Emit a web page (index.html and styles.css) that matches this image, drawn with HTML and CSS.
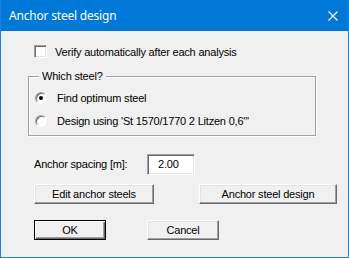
FILE: index.html
```html
<!DOCTYPE html>
<html>
<head>
<meta charset="utf-8">
<link rel="stylesheet" href="styles.css">
</head>
<body>
<div class="dialog">
  <div class="titlebar">
    <span class="title">Anchor steel design</span>
    <svg class="close" width="10" height="10" viewBox="0 0 10 10"><path d="M0.5 0.5 L9.5 9.5 M9.5 0.5 L0.5 9.5" stroke="#fff" stroke-width="1.1" fill="none"/></svg>
  </div>
  <div class="content">
    <div class="row check-row">
      <span class="checkbox"></span>
      <span class="label">Verify automatically after each analysis</span>
    </div>
    <div class="group">
      <span class="legend">Which steel?</span>
      <div class="row radio-row first">
        <span class="radio checked"></span>
        <span class="label">Find optimum steel</span>
      </div>
      <div class="row radio-row">
        <span class="radio"></span>
        <span class="label">Design using 'St 1570/1770 2 Litzen 0,6"'</span>
      </div>
    </div>
    <div class="row spacing-row">
      <span class="spacing-label">Anchor spacing [m]:</span>
      <span class="input">2.00</span>
    </div>
    <div class="row btn-row1">
      <span class="btn btn-edit">Edit anchor steels</span>
      <span class="btn btn-design">Anchor steel design</span>
    </div>
    <div class="row btn-row2">
      <span class="btn btn-ok default">OK</span>
      <span class="btn btn-cancel">Cancel</span>
    </div>
  </div>
</div>
</body>
</html>
```
FILE: styles.css
```css
html, body {
  margin: 0;
  padding: 0;
  background: #f0f0f0;
}
.dialog {
  width: 349px;
  height: 258px;
  box-sizing: border-box;
  border: 1px solid #1883d7;
  border-top: none;
  background: #f0f0f0;
  font-family: "Liberation Sans", Arial, sans-serif;
  font-size: 11px;
  letter-spacing: -0.2px;
  color: #000;
  overflow: hidden;
}
.titlebar {
  height: 31px;
  margin: 0 -1px;
  background: #0078d7;
  display: flex;
  align-items: center;
  justify-content: space-between;
  padding: 0 11px 0 9px;
}
.title {
  color: #fff;
  font-family: "Noto Sans", sans-serif;
  font-size: 12px;
  letter-spacing: -0.2px;
  margin-top: -1px;
}
.close {
  display: block;
  margin-top: 1px;
}
.content {
  padding-left: 33px;
  padding-top: 14px;
}
.row {
  display: flex;
  align-items: center;
}
.check-row {
  height: 13px;
}
.checkbox {
  width: 13px;
  height: 13px;
  box-sizing: border-box;
  border: 1px solid;
  border-color: #a0a0a0 #fff #fff #a0a0a0;
  box-shadow: inset 1px 1px 0 #696969, inset -1px -1px 0 #e3e3e3;
  background: #fff;
}
.check-row .label {
  margin-left: 8px;
}
.group {
  margin-top: 18px;
  margin-left: -6px;
  width: 288px;
  height: 60px;
  box-sizing: border-box;
  border: 1px solid #a0a0a0;
  box-shadow: 1px 1px 0 #fff, inset 1px 1px 0 #fff;
  position: relative;
  padding-left: 6px;
}
.legend {
  position: absolute;
  top: -7px;
  left: 10px;
  padding: 0 3px;
  background: #f0f0f0;
  line-height: 12px;
}
.radio-row {
  height: 12px;
}
.radio-row.first {
  margin-top: 15px;
}
.radio-row + .radio-row {
  margin-top: 11px;
}
.radio {
  width: 12px;
  height: 12px;
  box-sizing: border-box;
  border-radius: 50%;
  border: 1px solid;
  border-color: #a0a0a0 #fff #fff #a0a0a0;
  box-shadow: inset 1px 1px 0 #696969;
  background: #fff;
  position: relative;
}
.radio.checked::after {
  content: "";
  position: absolute;
  left: 3px;
  top: 3px;
  width: 4px;
  height: 4px;
  border-radius: 50%;
  background: #000;
}
.radio-row .label {
  margin-left: 10px;
}
.spacing-row {
  margin-top: 18px;
  height: 21px;
}
.spacing-label {
  width: 113px;
  margin-top: -2px;
}
.input {
  width: 48px;
  height: 21px;
  box-sizing: border-box;
  border: 1px solid;
  border-color: #a0a0a0 #fff #fff #a0a0a0;
  box-shadow: inset 1px 1px 0 #696969, inset -1px -1px 0 #e3e3e3;
  background: #fff;
  padding-left: 10px;
  line-height: 19px;
}
.btn-row1 {
  margin-top: 9px;
  height: 20px;
}
.btn-row2 {
  margin-top: 16px;
  height: 20px;
}
.btn {
  height: 20px;
  box-sizing: border-box;
  display: flex;
  align-items: center;
  justify-content: center;
  background: #f0f0f0;
  border: 1px solid;
  border-color: #fff #696969 #696969 #fff;
  box-shadow: inset -1px -1px 0 #a0a0a0, inset 1px 1px 0 #e3e3e3;
}
.btn.default {
  border: 1px solid #000;
  box-shadow: inset 1px 1px 0 #fff, inset -1px -1px 0 #696969, inset -2px -2px 0 #a0a0a0;
}
.btn-edit { width: 120px; }
.btn-design { width: 138px; margin-left: 45px; }
.btn-ok { width: 72px; }
.btn-cancel { width: 72px; margin-left: 41px; }
```
